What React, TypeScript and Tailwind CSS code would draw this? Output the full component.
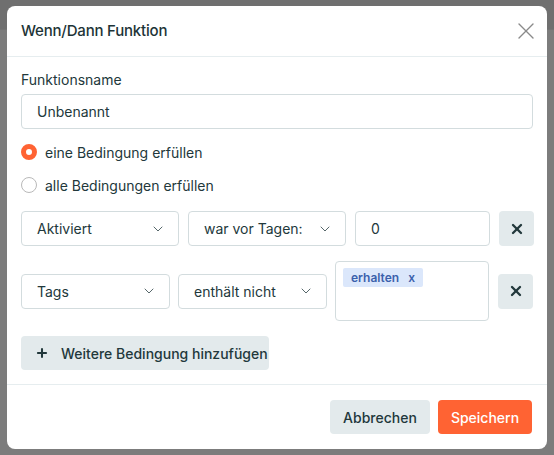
import React from "react";
import { ChevronDown, X, Plus } from "lucide-react";

const font = { fontFamily: "Inter, 'Noto Sans', sans-serif" };

function Select({ label, w }: { label: string; w: string }) {
  return (
    <div className={`${w} h-[35px] shrink-0 border border-[#d3dcde] rounded-[4px] flex items-center justify-between pl-[15px] pr-[12px] text-[14px] text-[#22383b]`}>
      <span>{label}</span>
      <ChevronDown size={16} strokeWidth={1.5} className="text-[#56676a]" />
    </div>
  );
}

function DelBtn() {
  return (
    <div className="w-[35px] h-[35px] shrink-0 rounded-[4px] bg-[#e3eaec] flex items-center justify-center text-[#22383b]">
      <X size={16} strokeWidth={3.5} />
    </div>
  );
}

export default function App() {
  return (
    <div className="relative w-[554px] h-[455px] overflow-hidden bg-[#7c7c7c]" style={font}>
      <div className="h-[30px] bg-[#6f6f6f] border-b border-[#737373]" />
      <div className="absolute left-[7px] top-[6px] w-[540px] h-[443px] bg-white rounded-[8px] flex flex-col">
        <div className="h-[51px] px-3.5 flex items-center justify-between border-b border-[#e6edef]">
          <span className="text-[15px] font-medium tracking-[-0.2px] text-[#1d3437]">Wenn/Dann Funktion</span>
          <X size={28} strokeWidth={1.2} className="text-[#8a8a8a] mr-[-7px]" />
        </div>
        <div className="px-3.5 pt-[13px] pb-[14px] flex flex-col">
          <div className="h-[20px] leading-[20px] text-[14px] text-[#22383b]">Funktionsname</div>
          <div className="mt-1 h-[35px] border border-[#d3dcde] rounded-[4px] flex items-center pl-[15px] text-[14px] text-[#22383b]">Unbenannt</div>
          <div className="mt-[13px] h-[20px] flex items-center gap-2 text-[14px] text-[#22383b]">
            <span className="w-[16px] h-[16px] rounded-full border-[5px] border-[#ff6333] bg-white" />
            <span>eine Bedingung erfüllen</span>
          </div>
          <div className="mt-[13px] h-[20px] flex items-center gap-2 text-[14px] text-[#22383b]">
            <span className="w-[16px] h-[16px] rounded-full border border-[#b9b9b9] bg-white" />
            <span>alle Bedingungen erfüllen</span>
          </div>
          <div className="mt-[16px] flex items-center gap-[9px]">
            <Select label="Aktiviert" w="w-[158px]" />
            <Select label="war vor Tagen:" w="w-[158px]" />
            <div className="w-[135px] h-[35px] shrink-0 border border-[#d3dcde] rounded-[4px] flex items-center pl-[15px] text-[14px] text-[#22383b]">0</div>
            <DelBtn />
          </div>
          <div className="mt-[15px] flex items-center gap-[8px]">
            <Select label="Tags" w="w-[149px]" />
            <Select label="enthält nicht" w="w-[149px]" />
            <div className="w-[154px] h-[60px] shrink-0 border border-[#d3dcde] rounded-[4px] pt-[6px] pl-[7px] flex items-start">
              <span className="flex items-center h-[19px] px-[8px] gap-[9px] bg-[#dbe7fb] rounded-[2px] text-[12px] font-semibold text-[#3b61ac]">
                <span>erhalten</span>
                <span>x</span>
              </span>
            </div>
            <div className="ml-px"><DelBtn /></div>
          </div>
          <div className="mt-[15px] w-[248px] h-[34px] rounded-[4px] bg-[#e3eaec] flex items-center pl-[14px] gap-[12px] text-[14px] font-medium text-[#22383b]">
            <Plus size={14} strokeWidth={3.5} />
            <span>Weitere Bedingung hinzufügen</span>
          </div>
        </div>
        <div className="border-t border-[#e6edef] flex justify-end gap-2 pt-[15px] px-[15px]">
          <div className="w-[100px] h-[34px] rounded-[4px] bg-[#e3eaec] flex items-center justify-center text-[14px] font-medium text-[#22383b]">Abbrechen</div>
          <div className="w-[94px] h-[34px] rounded-[4px] bg-[#ff6333] flex items-center justify-center text-[14px] font-medium text-white">Speichern</div>
        </div>
      </div>
    </div>
  );
}
